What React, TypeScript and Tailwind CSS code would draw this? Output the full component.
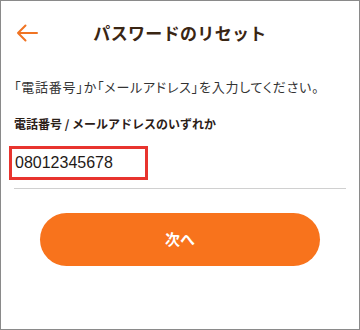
export default function App() {
  const font = {
    fontFamily: '"Noto Sans CJK JP", "Noto Sans", sans-serif',
  };

  return (
    <div
      className="w-[360px] h-[330px] border border-[#8a8a8a] bg-white flex flex-col"
      style={font}
    >
      {/* Header */}
      <div className="h-[63px] flex items-center px-[15px]">
        <svg
          width="22"
          height="18"
          viewBox="0 0 22 18"
          fill="none"
          stroke="#f07423"
          strokeWidth="2"
          strokeLinecap="round"
          strokeLinejoin="round"
        >
          <path d="M21 9H2M9.5 1.5L2 9l7.5 7.5" />
        </svg>
        <h1 className="flex-1 text-center text-[17px] font-bold text-[#3a2613] tracking-[0.02em]">
          パスワードのリセット
        </h1>
        <div className="w-[22px]" />
      </div>

      {/* Body */}
      <div className="px-[13px] flex flex-col">
        <p
          className="mt-[13px] text-[13px] leading-[20px] text-[#333333] tracking-[0.06em] whitespace-nowrap"
          style={{ fontFeatureSettings: '"palt"' }}
        >
          「電話番号」か「メールアドレス」を入力してください。
        </p>
        <label className="mt-[18px] text-[12px] leading-[18px] font-bold text-[#2b2018]">
          電話番号 / メールアドレスのいずれか
        </label>
        <div className="mt-[13px] ml-[-5px] w-[139px] h-[34px] border-[3px] border-[#e8342e] flex items-center pl-[3px]">
          <span className="text-[16px] text-[#1f1a17] font-['Liberation_Sans',sans-serif]">
            08012345678
          </span>
        </div>
        <div className="mt-[8px] border-b border-[#d0d0d0]" />
      </div>

      <div className="flex justify-center mt-[24px]">
        <button className="w-[280px] h-[53px] rounded-full bg-[#f8731c] text-white text-[15px] font-bold">
          次へ
        </button>
      </div>
    </div>
  );
}
